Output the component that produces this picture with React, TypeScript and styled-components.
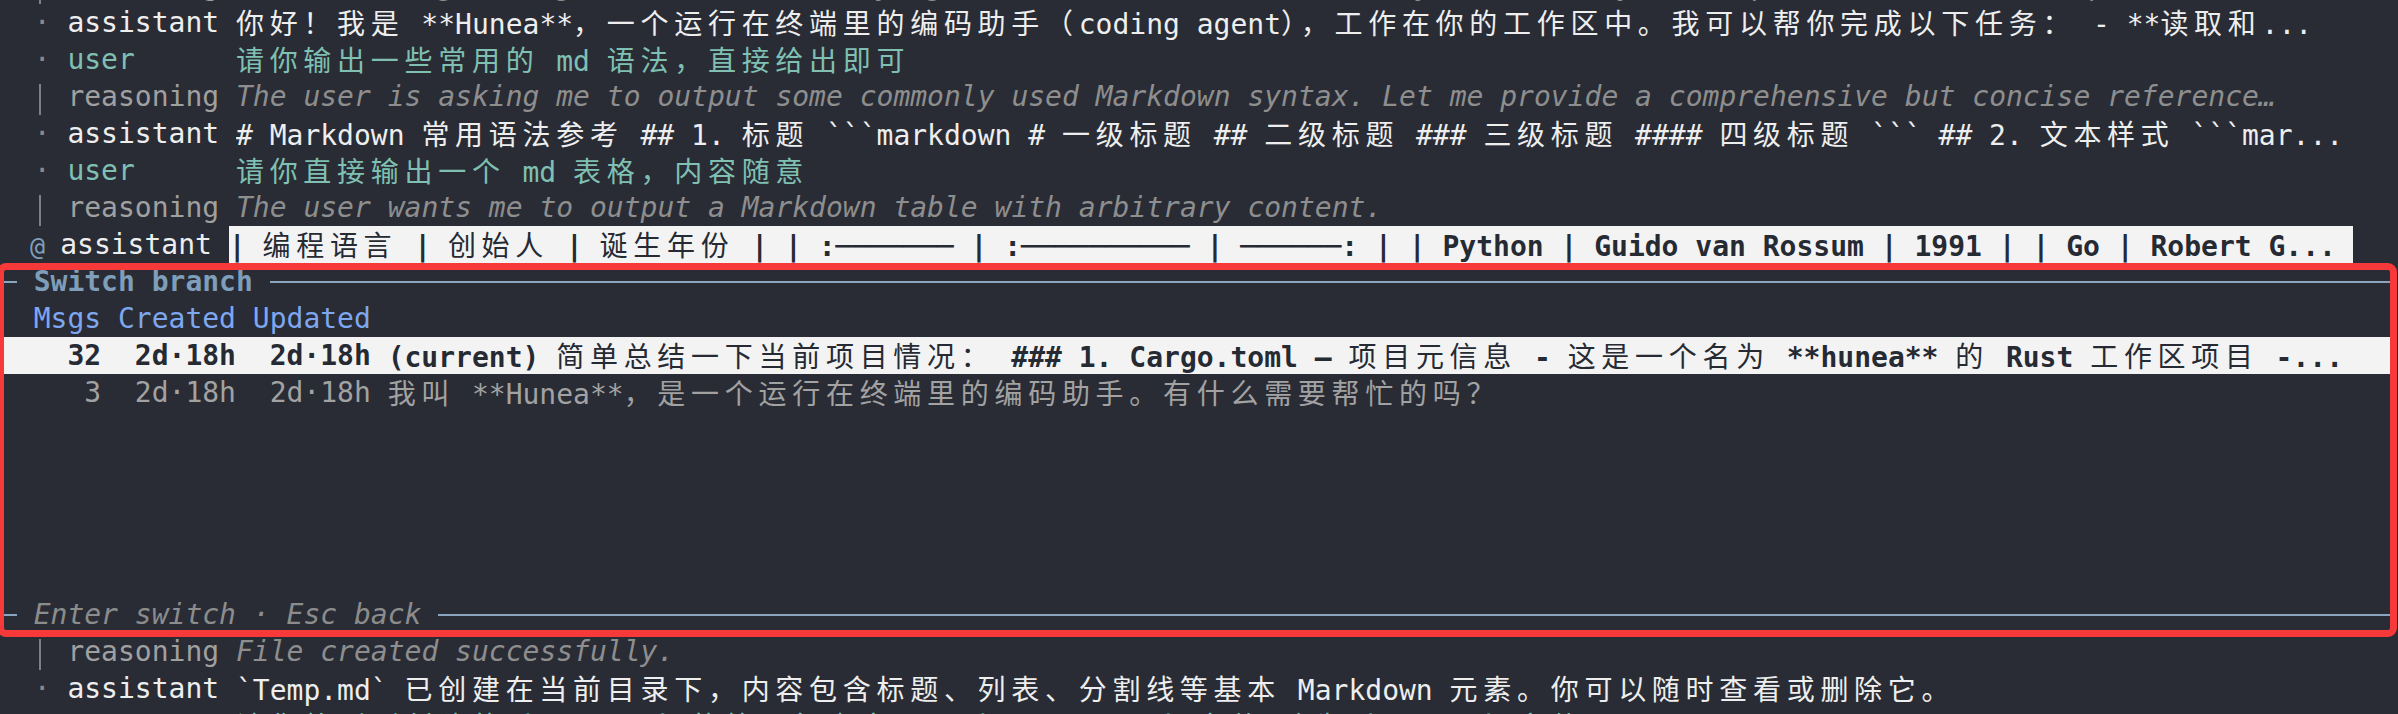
import React from "react";
import styled, { createGlobalStyle, css } from "styled-components";

const C = {
  bg: "#292c35",
  text: "#eeeeee",
  user: "#7fc0b2",
  role: "#a0a0a0",
  reason: "#8e8e8e",
  dot: "#8a8a8a",
  bar: "#7d8088",
  at: "#7fa0bd",
  rule: "#8aa5c0",
  title: "#7f9eba",
  head: "#7ea7f0",
  footer: "#8c8c8c",
  dim: "#a2a2a2",
  hiBg: "#f3f3f3",
  hiText: "#262a33",
  red: "#f7393a",
};

type Kind = "assistant" | "user" | "reasoning";

const Global = createGlobalStyle`
  html, body { margin: 0; padding: 0; background: ${C.bg}; overflow: hidden; }
  #root { width: 2398px; height: 714px; }
`;

const Screen = styled.main`
  width: 2398px;
  height: 714px;
  overflow: hidden;
  background: ${C.bg};
  color: ${C.text};
  font-family: "DejaVu Sans Mono", "Noto Sans CJK SC", monospace;
  font-size: 28px;
  line-height: 37px;
`;

const Scroll = styled.div`
  display: flex;
  flex-direction: column;
  margin-top: -33px;
`;

const Row = styled.div`
  display: flex;
  align-items: stretch;
  height: 37px;
  overflow: hidden;
  white-space: pre;
`;

const Marker = styled.span<{ $kind: "dot" | "bar" | "at" }>`
  flex: none;
  width: 1ch;
  margin-left: 2ch;
  margin-right: 1ch;
  display: flex;
  justify-content: center;
  align-items: center;
  color: ${(p) => (p.$kind === "at" ? C.at : C.dot)};
  ${(p) =>
    p.$kind === "at" &&
    css`
      font-size: 25px;
      padding-top: 3px;
    `}
`;

const ReasonBar = styled.span`
  align-self: stretch;
  width: 2px;
  margin-top: 6px;
  margin-right: 4px;
  background: ${C.bar};
`;

const Role = styled.span<{ $kind: Kind }>`
  flex: none;
  width: 10ch;
  color: ${(p) => (p.$kind === "user" ? C.user : p.$kind === "reasoning" ? C.role : C.text)};
`;

const Body = styled.span<{ $kind: Kind }>`
  flex: 1 1 auto;
  min-width: 0;
  overflow: hidden;
  color: ${(p) => (p.$kind === "user" ? C.user : p.$kind === "reasoning" ? C.reason : C.text)};
  font-style: ${(p) => (p.$kind === "reasoning" ? "italic" : "normal")};
`;

const Highlight = styled.span`
  display: inline-block;
  height: 37px;
  padding-right: 1ch;
  background: ${C.hiBg};
  color: ${C.hiText};
  font-weight: bold;
`;

const Wide = styled.span`
  font-family: "Noto Sans CJK SC", sans-serif;
  font-weight: 400;
  font-style: normal;
  letter-spacing: 5.71px;
`;

const WIDE_RE = /([\u2e80-\u9fff\uf900-\ufaff\ufe30-\ufe4f\uff00-\uff60\uffe0-\uffe6]+)/;

function Mono({ text }: { text: string }) {
  const parts = text.split(WIDE_RE);
  return (
    <>
      {parts.map((p, i) => (i % 2 === 1 ? <Wide key={i}>{p}</Wide> : <React.Fragment key={i}>{p}</React.Fragment>))}
    </>
  );
}

/* ---------- dialog ---------- */

const Dialog = styled.section`
  position: relative;
  width: 2390px;
  display: flex;
  flex-direction: column;

  &::after {
    content: "";
    position: absolute;
    left: -3px;
    right: -7px;
    top: 0;
    bottom: -4px;
    border: 7px solid ${C.red};
    border-radius: 9px;
    pointer-events: none;
  }
`;

const BorderRow = styled.div`
  display: flex;
  align-items: center;
  height: 37px;
  white-space: pre;
`;

const Cap = styled.span`
  flex: none;
  width: 1ch;
  height: 2px;
  margin-right: 1ch;
  background: ${C.rule};
`;

const Fill = styled.span`
  flex: 1 1 auto;
  height: 2px;
  margin-left: 1ch;
  background: ${C.rule};
`;

const BorderLabel = styled.span<{ $variant: "title" | "footer" }>`
  ${(p) =>
    p.$variant === "title"
      ? css`
          color: ${C.title};
          font-weight: bold;
        `
      : css`
          color: ${C.footer};
          font-style: italic;
        `}
`;

const BranchGrid = styled.div<{ $tone: "head" | "selected" | "plain" | "empty" }>`
  display: grid;
  grid-template-columns: 4ch 7ch 7ch 1fr;
  column-gap: 1ch;
  height: 37px;
  padding-left: 2ch;
  white-space: pre;
  overflow: hidden;
  ${(p) =>
    p.$tone === "head"
      ? css`
          color: ${C.head};
        `
      : p.$tone === "selected"
      ? css`
          background: ${C.hiBg};
          color: ${C.hiText};
          font-weight: bold;
        `
      : css`
          color: ${C.dim};
        `}
`;

const Cell = styled.span<{ $right?: boolean }>`
  text-align: ${(p) => (p.$right ? "right" : "left")};
  overflow: hidden;
`;

/* ---------- data ---------- */

type Msg = { kind: Kind; marker: "dot" | "bar" | "at"; text: string; current?: boolean };

const before: Msg[] = [
  {
    kind: "reasoning",
    marker: "bar",
    text: "The user is greeting me in Chinese, saying hello. I should introduce myself briefly and explain what I can help with.",
  },
  {
    kind: "assistant",
    marker: "dot",
    text: "你好！我是 **Hunea**，一个运行在终端里的编码助手（coding agent），工作在你的工作区中。我可以帮你完成以下任务： - **读取和...",
  },
  { kind: "user", marker: "dot", text: "请你输出一些常用的 md 语法，直接给出即可" },
  {
    kind: "reasoning",
    marker: "bar",
    text: "The user is asking me to output some commonly used Markdown syntax. Let me provide a comprehensive but concise reference…",
  },
  {
    kind: "assistant",
    marker: "dot",
    text: "# Markdown 常用语法参考 ## 1. 标题 ```markdown # 一级标题 ## 二级标题 ### 三级标题 #### 四级标题 ``` ## 2. 文本样式 ```mar...",
  },
  { kind: "user", marker: "dot", text: "请你直接输出一个 md 表格，内容随意" },
  {
    kind: "reasoning",
    marker: "bar",
    text: "The user wants me to output a Markdown table with arbitrary content.",
  },
  {
    kind: "assistant",
    marker: "at",
    current: true,
    text: "| 编程语言 | 创始人 | 诞生年份 | | :─────── | :────────── | ──────: | | Python | Guido van Rossum | 1991 | | Go | Robert G...",
  },
];

const after: Msg[] = [
  { kind: "reasoning", marker: "bar", text: "File created successfully." },
  {
    kind: "assistant",
    marker: "dot",
    text: "`Temp.md` 已创建在当前目录下，内容包含标题、列表、分割线等基本 Markdown 元素。你可以随时查看或删除它。",
  },
  {
    kind: "user",
    marker: "dot",
    text: "请你将刚刚创建的 `Temp.md` 的第一行内容，从 `# Markdown` 文件 改为 `# Temp` 文件",
  },
];

type Branch = { msgs: string; created: string; updated: string; text: string; selected?: boolean };

const branches: Branch[] = [
  {
    msgs: "32",
    created: "2d·18h",
    updated: "2d·18h",
    selected: true,
    text: "(current) 简单总结一下当前项目情况： ### 1. Cargo.toml – 项目元信息 - 这是一个名为 **hunea** 的 Rust 工作区项目 -...",
  },
  {
    msgs: "3",
    created: "2d·18h",
    updated: "2d·18h",
    text: "我叫 **Hunea**，是一个运行在终端里的编码助手。有什么需要帮忙的吗？",
  },
];

function MessageRow({ m }: { m: Msg }) {
  return (
    <Row>
      <Marker $kind={m.marker}>{m.marker === "bar" ? <ReasonBar /> : m.marker === "at" ? "@" : "·"}</Marker>
      <Role $kind={m.kind}>{m.kind}</Role>
      <Body $kind={m.kind}>
        {m.current ? (
          <Highlight>
            <Mono text={m.text} />
          </Highlight>
        ) : (
          <Mono text={m.text} />
        )}
      </Body>
    </Row>
  );
}

function BranchDialog() {
  return (
    <Dialog>
      <BorderRow>
        <Cap />
        <BorderLabel $variant="title">Switch branch</BorderLabel>
        <Fill />
      </BorderRow>
      <BranchGrid $tone="head">
        <Cell>Msgs</Cell>
        <Cell>Created</Cell>
        <Cell>Updated</Cell>
        <Cell />
      </BranchGrid>
      {branches.map((b, i) => (
        <BranchGrid key={i} $tone={b.selected ? "selected" : "plain"}>
          <Cell $right>{b.msgs}</Cell>
          <Cell $right>{b.created}</Cell>
          <Cell $right>{b.updated}</Cell>
          <Cell>
            <Mono text={b.text} />
          </Cell>
        </BranchGrid>
      ))}
      {[0, 1, 2, 3, 4].map((i) => (
        <BranchGrid key={`e${i}`} $tone="empty" />
      ))}
      <BorderRow>
        <Cap />
        <BorderLabel $variant="footer">Enter switch · Esc back</BorderLabel>
        <Fill />
      </BorderRow>
    </Dialog>
  );
}

export default function App() {
  return (
    <>
      <Global />
      <Screen>
        <Scroll>
          {before.map((m, i) => (
            <MessageRow key={`b${i}`} m={m} />
          ))}
          <BranchDialog />
          {after.map((m, i) => (
            <MessageRow key={`a${i}`} m={m} />
          ))}
        </Scroll>
      </Screen>
    </>
  );
}
